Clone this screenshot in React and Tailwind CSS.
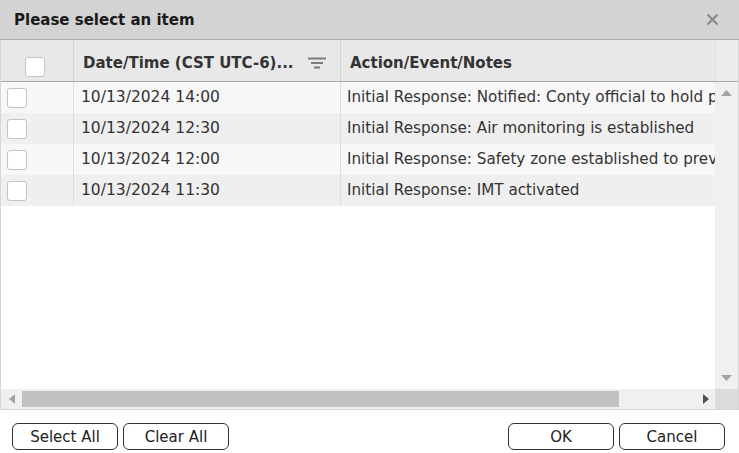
import React from "react";

const rows = [
  ["10/13/2024 14:00", "Initial Response: Notified: Conty official to hold press conference at 15:00"],
  ["10/13/2024 12:30", "Initial Response: Air monitoring is established"],
  ["10/13/2024 12:00", "Initial Response: Safety zone established to prevent entry"],
  ["10/13/2024 11:30", "Initial Response: IMT activated"],
];

function Box({ cls }) {
  return <div className={"bg-white border border-[#c4c4c4] rounded-[3px] " + cls} />;
}

function Btn({ children, w }) {
  return (
    <button className={"h-[27px] border border-[#333] rounded-[6px] bg-white text-[15px] text-[#222] flex items-center justify-center pt-[2px] " + w}>
      {children}
    </button>
  );
}

export default function App() {
  return (
    <div className="w-[739px] h-[453px] bg-white flex flex-col overflow-hidden" style={{ fontFamily: '"DejaVu Sans", Verdana, sans-serif' }}>
      <div className="h-[40px] shrink-0 bg-[#d3d3d3] border-b border-[#a9a9a9] flex items-center justify-between pl-[14px] pr-[20px]">
        <span className="text-[15px] font-bold text-[#1a1a1a] pt-[1px]">Please select an item</span>
        <svg width="13" height="13" viewBox="0 0 13 13">
          <path d="M1.5 1.5 L11.5 11.5 M11.5 1.5 L1.5 11.5" stroke="#8a8a8a" strokeWidth="2.2" />
        </svg>
      </div>
      <div className="h-[370px] shrink-0 flex flex-col border-l border-r border-[#d6d6d6] border-b">
        <div className="h-[42px] shrink-0 flex bg-[#e8e8e8] border-b border-[#a9a9a9]">
          <div className="w-[73px] shrink-0 border-r border-[#d4d4d4] flex items-end pb-[4px] pl-[24px]">
            <Box cls="w-[20px] h-[20px]" />
          </div>
          <div className="w-[267px] shrink-0 border-r border-[#d4d4d4] flex items-center pl-[9px] pr-[14px] justify-between pt-[6px]">
            <span className="text-[15px] font-bold text-[#333]">Date/Time (CST UTC-6)...</span>
            <svg width="18" height="12" viewBox="0 0 18 12" className="-mt-[2px]">
              <rect x="0" y="0.5" width="18" height="2" fill="#7a7a7a" />
              <rect x="3" y="5" width="12" height="2" fill="#7a7a7a" />
              <rect x="6" y="9.5" width="6" height="2" fill="#7a7a7a" />
            </svg>
          </div>
          <div className="flex-1 flex items-center pl-[9px] pt-[6px]">
            <span className="text-[15px] font-bold text-[#333]">Action/Event/Notes</span>
          </div>
          <div className="w-[23px] shrink-0 border-l border-[#dcdcdc] bg-[#ececec]" />
        </div>
        <div className="flex-1 flex min-h-0">
          <div className="flex-1 flex flex-col overflow-hidden">
            {rows.map((r, i) => (
              <div key={i} className={"h-[31px] shrink-0 flex " + (i % 2 === 0 ? "bg-[#f7f7f7]" : "bg-[#efefef]")}>
                <div className="w-[73px] shrink-0 border-r border-[#dedede] flex items-center pl-[6px]">
                  <Box cls="w-[20px] h-[20px]" />
                </div>
                <div className="w-[267px] shrink-0 border-r border-[#dedede] flex items-center pl-[7px] text-[15.5px] text-[#333] whitespace-nowrap">
                  {r[0]}
                </div>
                <div className="flex-1 flex items-center pl-[6px] text-[15.2px] text-[#333] whitespace-nowrap overflow-hidden">
                  {r[1]}
                </div>
              </div>
            ))}
          </div>
          <div className="w-[23px] shrink-0 bg-[#f0f0f0] flex flex-col items-center justify-between py-[8px]">
            <svg width="11" height="6" viewBox="0 0 11 6"><path d="M0 6 L5.5 0 L11 6 Z" fill="#a3a3a3" /></svg>
            <svg width="11" height="6" viewBox="0 0 11 6"><path d="M0 0 L5.5 6 L11 0 Z" fill="#a3a3a3" /></svg>
          </div>
        </div>
        <div className="h-[20px] shrink-0 flex">
          <div className="flex-1 bg-[#f0f0f0] flex items-center">
            <div className="w-[21px] flex items-center justify-center">
              <svg width="6" height="10" viewBox="0 0 6 10"><path d="M6 0 L0 5 L6 10 Z" fill="#a3a3a3" /></svg>
            </div>
            <div className="w-[597px] h-[16px] bg-[#c1c1c1]" />
            <div className="flex-1 flex items-center justify-end pr-[6px]">
              <svg width="6" height="10" viewBox="0 0 6 10"><path d="M0 0 L6 5 L0 10 Z" fill="#505050" /></svg>
            </div>
          </div>
          <div className="w-[23px] shrink-0 bg-[#dcdcdc]" />
        </div>
      </div>
      <div className="flex-1 flex items-start pt-[13px] px-[12px] justify-between">
        <div className="flex gap-[5px]">
          <Btn w="w-[106px]">Select All</Btn>
          <Btn w="w-[106px]">Clear All</Btn>
        </div>
        <div className="flex gap-[5px] pr-[2px]">
          <Btn w="w-[106px]">OK</Btn>
          <Btn w="w-[106px]">Cancel</Btn>
        </div>
      </div>
    </div>
  );
}
